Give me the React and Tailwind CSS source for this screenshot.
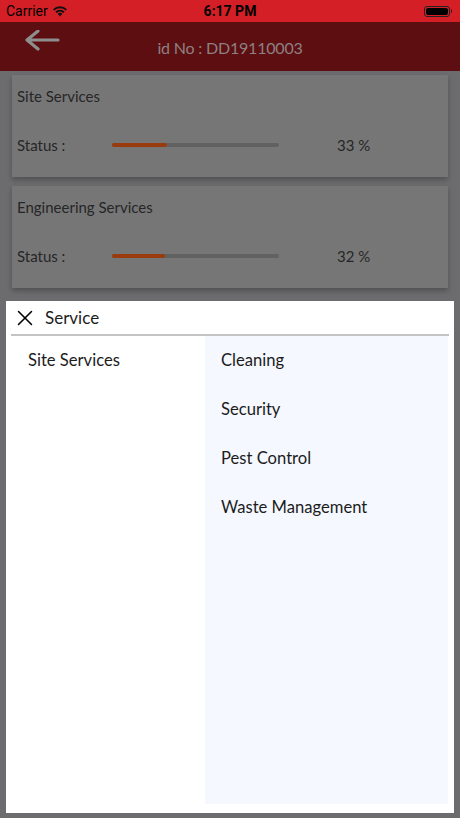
import { X } from 'lucide-react'

const SERVICES = [
  { name: 'Site Services', pct: 33 },
  { name: 'Engineering Services', pct: 32 },
]

const SUB_ITEMS = ['Cleaning', 'Security', 'Pest Control', 'Waste Management']

function StatusBar() {
  return (
    <div className="relative flex h-[22px] items-center bg-[#d41f26] px-[6px] text-[14px] text-black" style={{ fontFamily: 'Roboto, "Liberation Sans", sans-serif' }}>
      <span>Carrier</span>
      <svg className="ml-[4px]" width="16" height="12" viewBox="0 0 16 12">
        <path d="M8 11.5 L5.6 8.8 A3.6 3.6 0 0 1 10.4 8.8 Z" fill="#111" />
        <path d="M3.4 6.6 A6.6 6.6 0 0 1 12.6 6.6 L11.3 8 A4.8 4.8 0 0 0 4.7 8 Z" fill="#111" />
        <path d="M1 4.2 A10 10 0 0 1 15 4.2 L13.7 5.6 A8.1 8.1 0 0 0 2.3 5.6 Z" fill="#111" />
      </svg>
      <span className="absolute left-1/2 -translate-x-1/2 font-bold">6:17 PM</span>
      <div className="ml-auto mr-[2px] flex items-center">
        <div className="flex h-[11px] w-[26px] items-center rounded-[3px] border border-[#222] p-[1px]">
          <div className="h-full w-full rounded-[2px] bg-black" />
        </div>
        <div className="ml-[1px] h-[4px] w-[1.5px] rounded-r bg-[#222]" />
      </div>
    </div>
  )
}

function ServiceCard({ name, pct }) {
  return (
    <div className="mx-[12px] h-[102px] bg-[#767676] px-[5px] pt-[11px] shadow-[0_3px_5px_rgba(0,0,0,0.25)]">
      <div className="text-[15px] leading-[20px] text-[#262626]">{name}</div>
      <div className="mt-[29px] flex items-center text-[15px] leading-[20px] text-[#262626]">
        <span className="w-[95px]">Status :</span>
        <div className="h-[4px] w-[167px] rounded-full bg-[#616161]">
          <div className="h-full rounded-full bg-[#9a3b0e]" style={{ width: `${pct}%` }} />
        </div>
        <span className="ml-[58px]">{pct} %</span>
      </div>
    </div>
  )
}

export default function App() {
  return (
    <div className="flex h-[818px] w-[460px] flex-col overflow-hidden bg-[#6c6c6e]" style={{ fontFamily: 'Lato, "Open Sans", sans-serif' }}>
      <StatusBar />
      <div className="relative flex h-[49px] items-center justify-center bg-[#5c0e11]">
        <svg className="absolute left-[24px] top-[8px]" width="36" height="22" viewBox="0 0 36 22">
          <path d="M34 10 H4 M14 1 L3 10 L14 19" fill="none" stroke="#8e8e8e" strokeWidth="3.2" strokeLinecap="round" strokeLinejoin="round" />
        </svg>
        <span className="mt-[3px] text-[16px] tracking-[-0.2px] text-[#8e8082]">id No : DD19110003</span>
      </div>

      <div className="mt-[4px] flex flex-col gap-[9px]">
        {SERVICES.map((s) => (
          <ServiceCard key={s.name} {...s} />
        ))}
      </div>

      {/* Service picker sheet */}
      <div className="mx-[6px] mt-[13px] flex h-[512px] flex-col bg-white">
        <div className="flex h-[33px] items-center px-[6px]">
          <X size={26} strokeWidth={1.4} className="text-black" />
          <span className="ml-[7px] text-[17px] text-[#1c1c1c]">Service</span>
        </div>
        <div className="mx-[5px] h-[2px] bg-[#c4c4c4]" />
        <div className="flex flex-1 pb-[9px]">
          <div className="w-[199px] pl-[22px] pt-[13px]">
            <div className="text-[16.6px] leading-[22px] text-[#1c1c1c]">Site Services</div>
          </div>
          <div className="mr-[6px] flex flex-1 flex-col gap-[27px] bg-[#f5f8ff] pl-[16px] pt-[13px]">
            {SUB_ITEMS.map((item) => (
              <div key={item} className="text-[16.6px] leading-[22px] text-[#1c1c1c]">{item}</div>
            ))}
          </div>
        </div>
      </div>
    </div>
  )
}
